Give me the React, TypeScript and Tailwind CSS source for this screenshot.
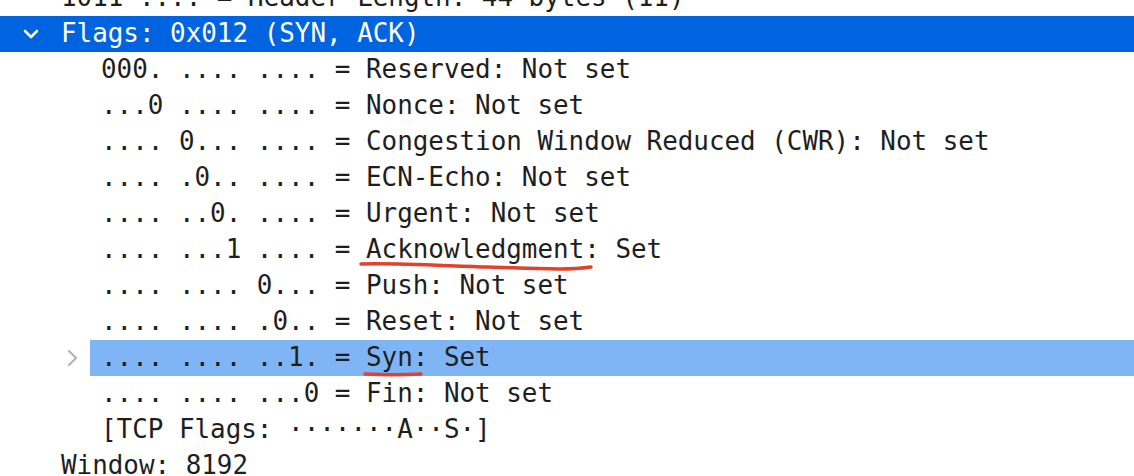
import { ReactNode } from 'react'

type Row = {
  depth: 1 | 2
  text: ReactNode
  branch?: 'open' | 'closed'
  selected?: 'strong' | 'soft'
}

const AckMark = () => (
  <span className="relative">
    Acknowledgment
    <svg className="absolute left-[-7px] top-[27px] pointer-events-none" width="236" height="12" viewBox="0 0 236 12">
      <path
        d="M2 3 C 40 2, 90 5, 130 6 C 160 7, 175 8, 200 8 C 215 8, 225 7, 232 6"
        fill="none"
        stroke="#e5402a"
        strokeWidth="3.5"
        strokeLinecap="round"
      />
    </svg>
  </span>
)

const SynMark = () => (
  <span className="relative">
    Syn
    <svg className="absolute left-[-3px] top-[28px] pointer-events-none" width="64" height="10" viewBox="0 0 64 10">
      <path d="M2 4 C 20 5, 40 5, 58 4" fill="none" stroke="#e5402a" strokeWidth="3.5" strokeLinecap="round" />
    </svg>
  </span>
)

const rows: Row[] = [
  { depth: 1, text: '1011 .... = Header Length: 44 bytes (11)' },
  { depth: 1, text: 'Flags: 0x012 (SYN, ACK)', branch: 'open', selected: 'strong' },
  { depth: 2, text: '000. .... .... = Reserved: Not set' },
  { depth: 2, text: '...0 .... .... = Nonce: Not set' },
  { depth: 2, text: '.... 0... .... = Congestion Window Reduced (CWR): Not set' },
  { depth: 2, text: '.... .0.. .... = ECN-Echo: Not set' },
  { depth: 2, text: '.... ..0. .... = Urgent: Not set' },
  { depth: 2, text: <>.... ...1 .... = <AckMark />: Set</> },
  { depth: 2, text: '.... .... 0... = Push: Not set' },
  { depth: 2, text: '.... .... .0.. = Reset: Not set' },
  { depth: 2, text: <>.... .... ..1. = <SynMark />: Set</>, branch: 'closed', selected: 'soft' },
  { depth: 2, text: '.... .... ...0 = Fin: Not set' },
  { depth: 2, text: '[TCP Flags: ·······A··S·]' },
  { depth: 1, text: 'Window: 8192' },
]

const OpenChevron = () => (
  <svg width="16" height="10" viewBox="0 0 16 10" className="ml-[23px]">
    <path d="M2 2 L8 8 L14 2" fill="none" stroke="#ffffff" strokeWidth="2.6" strokeLinecap="round" strokeLinejoin="round" />
  </svg>
)

const ClosedChevron = () => (
  <svg width="11" height="18" viewBox="0 0 11 18" className="ml-[67px]">
    <path d="M2 2 L9 9 L2 16" fill="none" stroke="#b4b4b4" strokeWidth="2.2" strokeLinecap="round" strokeLinejoin="round" />
  </svg>
)

export default function App() {
  return (
    <div className="w-[1134px] h-[476px] overflow-hidden bg-white">
      <div className="mt-[-20px] flex flex-col font-['DejaVu_Sans_Mono',monospace] text-[25.9px] text-[#1e1e1e] whitespace-pre">
        {rows.map((r, i) => {
          const strong = r.selected === 'strong'
          const soft = r.selected === 'soft'
          return (
            <div key={i} className={`flex h-[36px] items-center ${strong ? 'bg-[#0064e0] text-white' : ''}`}>
              <div className={`flex items-center shrink-0 ${r.depth === 1 ? 'w-[50px]' : 'w-[90px]'}`}>
                {r.branch === 'open' && <OpenChevron />}
                {r.branch === 'closed' && <ClosedChevron />}
              </div>
              <div className={`flex-1 h-full flex items-center pl-[11px] ${soft ? 'bg-[#80b5f5]' : ''}`}>
                <span className="leading-none">{r.text}</span>
              </div>
            </div>
          )
        })}
      </div>
    </div>
  )
}
